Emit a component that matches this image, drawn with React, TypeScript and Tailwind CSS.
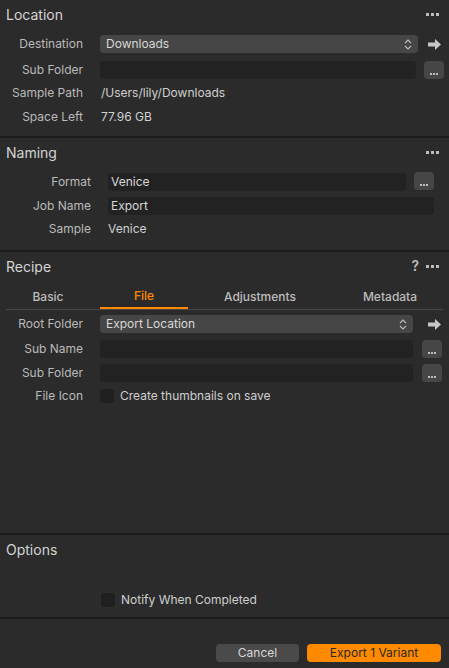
import React from 'react';

const font = { fontFamily: 'Inter, "Noto Sans", sans-serif' };

function Dots() {
  return (
    <div className="flex gap-[2px]">
      <span className="w-[3px] h-[3px] bg-[#bcbcbc]" />
      <span className="w-[3px] h-[3px] bg-[#bcbcbc]" />
      <span className="w-[3px] h-[3px] bg-[#bcbcbc]" />
    </div>
  );
}

function Arrow() {
  return (
    <svg width="13" height="11" viewBox="0 0 13 11" className="block">
      <path d="M0 3.5 H7 V0 L13 5.5 L7 11 V7.5 H0 Z" fill="#c6c6c6" />
    </svg>
  );
}

function Chevrons() {
  return (
    <svg width="8" height="13" viewBox="0 0 8 13" className="block">
      <path d="M1 5 L4 2 L7 5" stroke="#bdbdbd" strokeWidth="1.1" fill="none" />
      <path d="M1 8 L4 11 L7 8" stroke="#bdbdbd" strokeWidth="1.1" fill="none" />
    </svg>
  );
}

function MoreButton() {
  return (
    <div className="w-[20px] h-[18px] rounded-[4px] bg-[#464646] flex items-end justify-center pb-[4px]">
      <div className="flex gap-[1px]">
        <span className="w-[2px] h-[2px] bg-[#bdbdbd]" />
        <span className="w-[2px] h-[2px] bg-[#bdbdbd]" />
        <span className="w-[2px] h-[2px] bg-[#bdbdbd]" />
      </div>
    </div>
  );
}

function Header({ title, help, menu = true }: { title: string; help?: boolean; menu?: boolean }) {
  return (
    <div className="h-[28px] flex items-center justify-between pl-[6px] pr-[10px]">
      <span className="text-[14px] text-[#d4d4d4]">{title}</span>
      <div className="flex items-center gap-[7px]">
        {help && <span className="text-[14px] font-semibold text-[#bcbcbc] leading-none">?</span>}
        {menu && <Dots />}
      </div>
    </div>
  );
}

function Label({ w, children }: { w: string; children: React.ReactNode }) {
  return <div className={`${w} shrink-0 text-right text-[12px] text-[#bababa]`}>{children}</div>;
}

export default function App() {
  return (
    <div style={font} className="w-[449px] h-[668px] bg-[#2b2b2b] flex flex-col overflow-hidden">
      {/* Location */}
      <div className="h-[138px] border-b-2 border-[#1b1b1b]">
        <Header title="Location" />
        <div className="mt-[7px] h-[18px] flex items-center">
          <Label w="w-[83px]">Destination</Label>
          <div className="ml-[17px] w-[318px] h-[18px] rounded-[4px] bg-[#464646] flex items-center justify-between pl-[6px] pr-[6px]">
            <span className="text-[12px] text-[#d8d8d8]">Downloads</span>
            <Chevrons />
          </div>
          <div className="ml-[10px]"><Arrow /></div>
        </div>
        <div className="mt-[8px] h-[18px] flex items-center">
          <Label w="w-[83px]">Sub Folder</Label>
          <div className="ml-[17px] w-[316px] h-[18px] rounded-[4px] bg-[#222222]" />
          <div className="ml-[8px]"><MoreButton /></div>
        </div>
        <div className="mt-[5px] h-[18px] flex items-center">
          <Label w="w-[83px]">Sample Path</Label>
          <span className="ml-[18px] text-[12px] text-[#d0d0d0]">/Users/lily/Downloads</span>
        </div>
        <div className="mt-[6px] h-[18px] flex items-center">
          <Label w="w-[83px]">Space Left</Label>
          <span className="ml-[18px] text-[12px] text-[#d0d0d0]">77.96 GB</span>
        </div>
      </div>

      {/* Naming */}
      <div className="h-[114px] border-b-2 border-[#1b1b1b]">
        <Header title="Naming" />
        <div className="mt-[7px] h-[18px] flex items-center">
          <Label w="w-[91px]">Format</Label>
          <div className="ml-[17px] w-[298px] h-[18px] rounded-[4px] bg-[#222222] flex items-center pl-[3px]">
            <span className="text-[12px] text-[#d8d8d8]">Venice</span>
          </div>
          <div className="ml-[8px] -mt-[2px]"><MoreButton /></div>
        </div>
        <div className="mt-[6px] h-[18px] flex items-center">
          <Label w="w-[91px]">Job Name</Label>
          <div className="ml-[17px] w-[326px] h-[18px] rounded-[4px] bg-[#222222] flex items-center pl-[3px]">
            <span className="text-[12px] text-[#d8d8d8]">Export</span>
          </div>
        </div>
        <div className="mt-[5px] h-[18px] flex items-center">
          <Label w="w-[91px]">Sample</Label>
          <span className="ml-[17px] text-[12px] text-[#d0d0d0]">Venice</span>
        </div>
      </div>

      {/* Recipe */}
      <div className="h-[283px] border-b-2 border-[#1b1b1b]">
        <Header title="Recipe" help />
        <div className="mx-[6px] mt-[4px] flex border-b border-[#474747] text-[12px] font-medium">
          <div className="w-[84px] h-[25px] flex items-center justify-center text-[#bdbdbd]">Basic</div>
          <div className="ml-[10px] w-[88px] h-[25px] -mb-px border-b-2 border-[#ff8a00] flex items-center justify-center text-[#ff8a00]">File</div>
          <div className="w-[144px] h-[25px] flex items-center justify-center text-[#bdbdbd]">Adjustments</div>
          <div className="flex-1 h-[25px] flex items-center justify-center pl-[5px] text-[#bdbdbd]">Metadata</div>
        </div>
        <div className="mt-[5px] h-[18px] flex items-center">
          <Label w="w-[83px]">Root Folder</Label>
          <div className="ml-[17px] w-[313px] h-[18px] rounded-[4px] bg-[#464646] flex items-center justify-between pl-[6px] pr-[6px]">
            <span className="text-[12px] text-[#d8d8d8]">Export Location</span>
            <Chevrons />
          </div>
          <div className="ml-[15px]"><Arrow /></div>
        </div>
        <div className="mt-[7px] h-[18px] flex items-center">
          <Label w="w-[83px]">Sub Name</Label>
          <div className="ml-[17px] w-[313px] h-[18px] rounded-[4px] bg-[#222222]" />
          <div className="ml-[9px]"><MoreButton /></div>
        </div>
        <div className="mt-[6px] h-[18px] flex items-center">
          <Label w="w-[83px]">Sub Folder</Label>
          <div className="ml-[17px] w-[313px] h-[18px] rounded-[4px] bg-[#222222]" />
          <div className="ml-[9px]"><MoreButton /></div>
        </div>
        <div className="mt-[5px] h-[18px] flex items-center">
          <Label w="w-[83px]">File Icon</Label>
          <div className="ml-[17px] w-[14px] h-[14px] rounded-[3px] bg-[#1f1f1f]" />
          <span className="ml-[6px] text-[12px] text-[#cfcfcf]">Create thumbnails on save</span>
        </div>
      </div>

      {/* Options */}
      <div className="h-[84px] border-b-2 border-[#1b1b1b]">
        <Header title="Options" menu={false} />
        <div className="mt-[28px] h-[18px] flex items-center pl-[101px]">
          <div className="w-[14px] h-[14px] rounded-[3px] bg-[#1f1f1f]" />
          <span className="ml-[6px] text-[12px] text-[#cfcfcf]">Notify When Completed</span>
        </div>
      </div>

      {/* Footer */}
      <div className="flex-1 flex items-end justify-end gap-[8px] pr-[8px] pb-[6px]">
        <button className="w-[83px] h-[18px] rounded-[4px] bg-[#4a4a4a] text-[12px] text-[#d8d8d8] leading-none">Cancel</button>
        <button className="w-[134px] h-[18px] rounded-[4px] bg-[#ff8a00] text-[12px] text-[#2a2a2a] leading-none">Export 1 Variant</button>
      </div>
    </div>
  );
}
